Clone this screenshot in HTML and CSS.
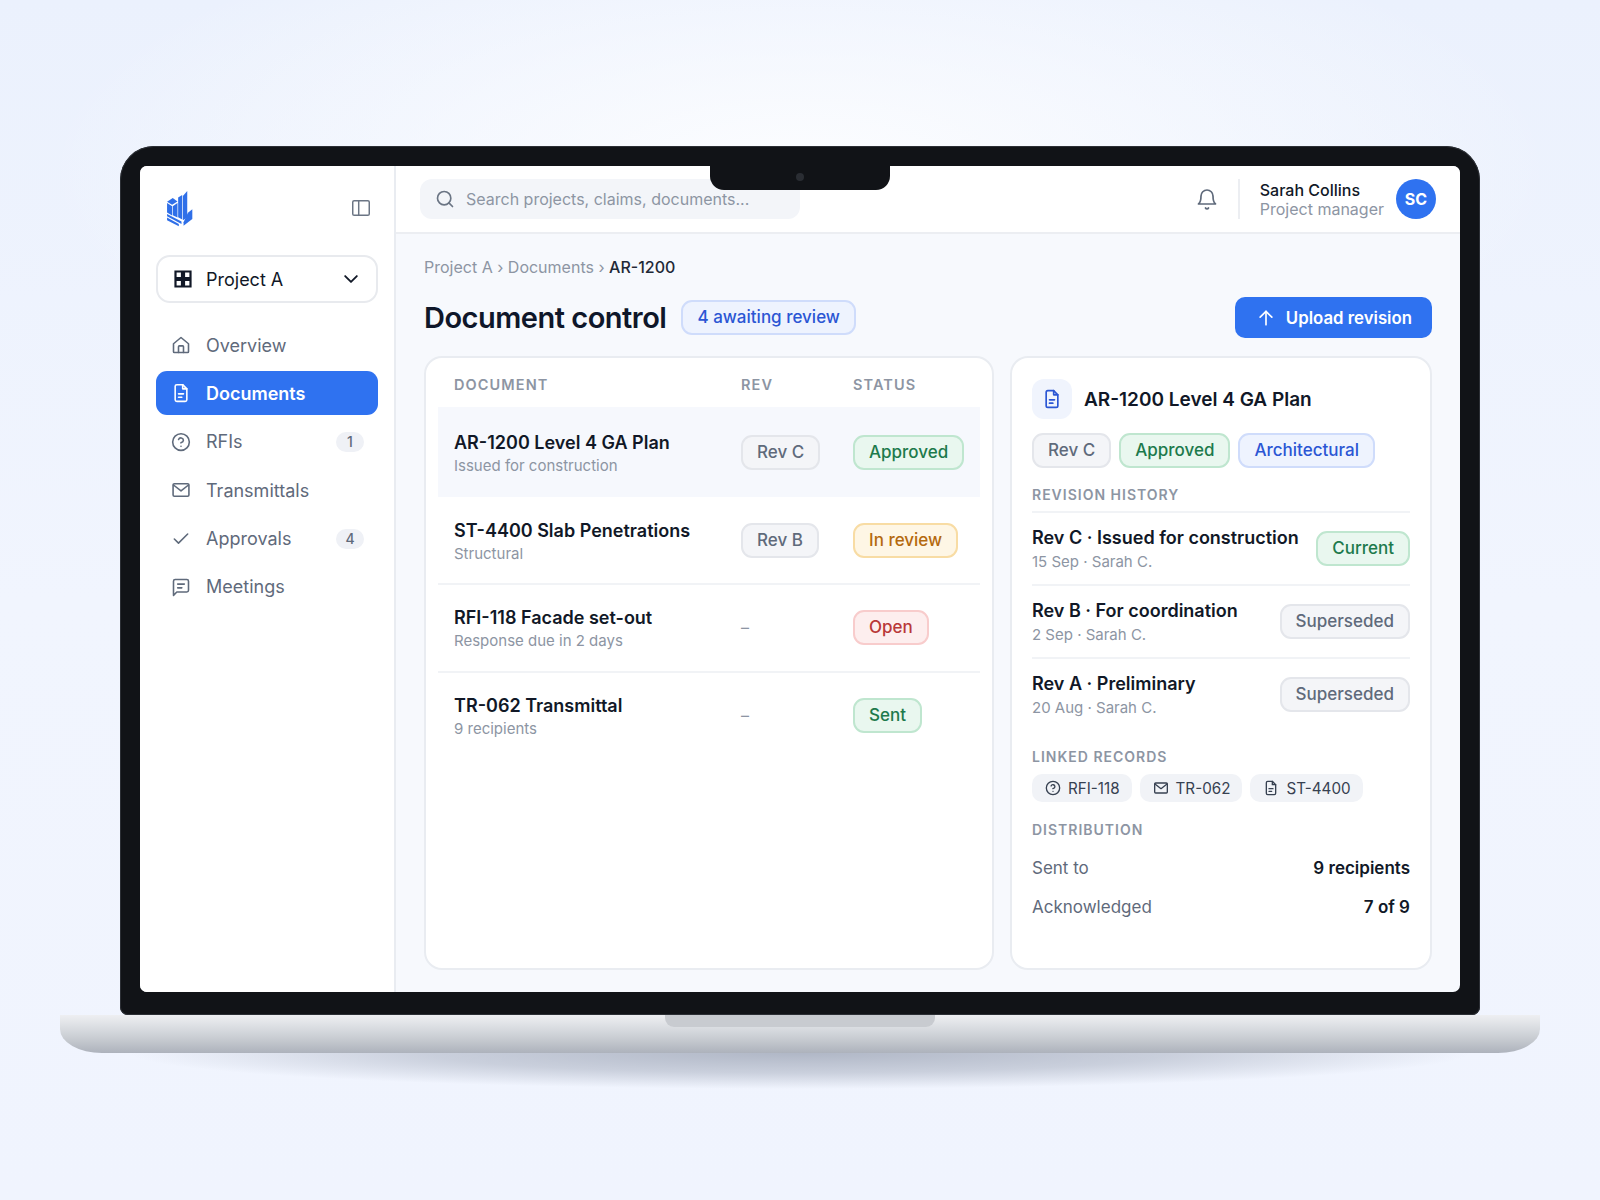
FILE: index.html
```html
<!DOCTYPE html>
<html lang="en">
<head>
    <meta charset="UTF-8">
    <title>Document control</title>
    <link rel="stylesheet" href="styles.css">
</head>
<body>
    <svg class="sprite" aria-hidden="true">
        <symbol id="i-home" viewBox="0 0 24 24"><path d="M3 10.500 12 3l9 7.500V20a1 1 0 0 1-1 1H4a1 1 0 0 1-1-1z"/><path d="M9 21v-7a1 1 0 0 1 1-1h4a1 1 0 0 1 1 1v7"/></symbol>
        <symbol id="i-file" viewBox="0 0 24 24"><path d="M14 2H7a2 2 0 0 0-2 2v16a2 2 0 0 0 2 2h10a2 2 0 0 0 2-2V7z"/><path d="M14 2v5h5"/><path d="M9 13h6"/><path d="M9 17h4"/></symbol>
        <symbol id="i-help" viewBox="0 0 24 24"><circle cx="12" cy="12" r="10"/><path d="M9.100 9a3 3 0 0 1 5.800 1c0 2-3 3-3 3"/><path d="M12 17h.01"/></symbol>
        <symbol id="i-mail" viewBox="0 0 24 24"><rect x="2.500" y="4.500" width="19" height="15" rx="1.500"/><path d="m3 6 9 7 9-7"/></symbol>
        <symbol id="i-check" viewBox="0 0 24 24"><path d="M20 6 9 17l-5-5"/></symbol>
        <symbol id="i-chat" viewBox="0 0 24 24"><path d="M21 16a2 2 0 0 1-2 2H7l-4 4V5a2 2 0 0 1 2-2h14a2 2 0 0 1 2 2z"/><path d="M8 8.500h8"/><path d="M8 13h5"/></symbol>
    </svg>

    <div class="laptop">
        <div class="bezel">
            <div class="notch"><span class="camera"></span></div>
            <div class="screen">
                <aside class="sidebar">
                    <div class="brand">
                        <svg class="logo" viewBox="140 150 80 110">
                            <path d="M143 185 160 174 174 184 158 194z"/>
                            <path d="M143 189 158 198V226L143 217z"/>
                            <path d="M160 198 174 189V232L160 225z"/>
                            <path d="M176 188V172L188 165V238L176 231z"/>
                            <path d="M190 168 203 153V232L190 240z"/>
                            <path d="M205 218 218 207V236L192 256V246z"/>
                            <path d="M143 221 186 244V251L143 228z"/>
                            <path d="M143 232 178 251V258L143 240z"/>
                        </svg>
                        <svg class="icon panel-icon" viewBox="0 0 24 24"><rect x="3" y="4" width="18" height="16" rx="1.500"/><path d="M9.500 4v16"/></svg>
                    </div>
                    <div class="project-select">
                        <svg class="project-icon" viewBox="0 0 18 18"><path d="M1.500 1.500h6.500v6.500H1.500zM10 1.500h6.500v6.500H10zM1.500 10h6.500v6.500H1.500zM10 10h6.500v6.500H10z"/></svg>
                        <span>Project A</span>
                        <svg class="icon chevron" viewBox="0 0 24 24"><path d="m5 8.500 7 7 7-7"/></svg>
                    </div>
                    <nav class="nav">
                        <a class="nav-item"><svg class="icon"><use href="#i-home"/></svg>Overview</a>
                        <a class="nav-item active"><svg class="icon"><use href="#i-file"/></svg>Documents</a>
                        <a class="nav-item"><svg class="icon"><use href="#i-help"/></svg>RFIs<span class="count">1</span></a>
                        <a class="nav-item"><svg class="icon"><use href="#i-mail"/></svg>Transmittals</a>
                        <a class="nav-item"><svg class="icon"><use href="#i-check"/></svg>Approvals<span class="count">4</span></a>
                        <a class="nav-item"><svg class="icon"><use href="#i-chat"/></svg>Meetings</a>
                    </nav>
                </aside>

                <div class="content">
                    <header class="topbar">
                        <div class="search">
                            <svg class="icon" viewBox="0 0 24 24"><circle cx="11" cy="11" r="8"/><path d="m21 21-4.300-4.300"/></svg>
                            <span>Search projects, claims, documents...</span>
                        </div>
                        <svg class="icon bell" viewBox="0 0 24 24"><path d="M6 9a6 6 0 0 1 12 0c0 6 2.500 8 2.500 8h-17S6 15 6 9"/><path d="M10.500 21a1.700 1.700 0 0 0 3 0"/></svg>
                        <div class="user">
                            <div class="user-text">
                                <div class="user-name">Sarah Collins</div>
                                <div class="user-role">Project manager</div>
                            </div>
                            <div class="avatar">SC</div>
                        </div>
                    </header>

                    <main class="main">
                        <div class="breadcrumb">Project A › Documents › <b>AR-1200</b></div>
                        <div class="page-head">
                            <h1>Document control</h1>
                            <span class="tag tag-blue head-tag">4 awaiting review</span>
                            <button class="upload">
                                <svg class="icon" viewBox="0 0 24 24"><path d="M12 20V4"/><path d="m5 11 7-7 7 7"/></svg>
                                Upload revision
                            </button>
                        </div>

                        <div class="panels">
                            <section class="card table-card">
                                <div class="doc-row doc-head">
                                    <span>DOCUMENT</span><span>REV</span><span>STATUS</span>
                                </div>
                                <div class="doc-row selected">
                                    <div class="doc-text"><div class="doc-name">AR-1200 Level 4 GA Plan</div><div class="doc-sub">Issued for construction</div></div>
                                    <div><span class="tag tag-grey">Rev C</span></div>
                                    <div><span class="tag tag-green">Approved</span></div>
                                </div>
                                <div class="doc-row after-selected">
                                    <div class="doc-text"><div class="doc-name">ST-4400 Slab Penetrations</div><div class="doc-sub">Structural</div></div>
                                    <div><span class="tag tag-grey">Rev B</span></div>
                                    <div><span class="tag tag-amber">In review</span></div>
                                </div>
                                <div class="doc-row">
                                    <div class="doc-text"><div class="doc-name">RFI-118 Facade set-out</div><div class="doc-sub">Response due in 2 days</div></div>
                                    <div class="dash">–</div>
                                    <div><span class="tag tag-red">Open</span></div>
                                </div>
                                <div class="doc-row">
                                    <div class="doc-text"><div class="doc-name">TR-062 Transmittal</div><div class="doc-sub">9 recipients</div></div>
                                    <div class="dash">–</div>
                                    <div><span class="tag tag-green">Sent</span></div>
                                </div>
                            </section>

                            <section class="card detail-card">
                                <div class="detail-head">
                                    <div class="detail-icon"><svg class="icon"><use href="#i-file"/></svg></div>
                                    <h2>AR-1200 Level 4 GA Plan</h2>
                                </div>
                                <div class="tags">
                                    <span class="tag tag-grey">Rev C</span>
                                    <span class="tag tag-green">Approved</span>
                                    <span class="tag tag-blue">Architectural</span>
                                </div>
                                <div class="label">REVISION HISTORY</div>
                                <div class="rev-list">
                                    <div class="rev-row">
                                        <div><div class="rev-name">Rev C · Issued for construction</div><div class="rev-sub">15 Sep · Sarah C.</div></div>
                                        <span class="tag tag-green">Current</span>
                                    </div>
                                    <div class="rev-row">
                                        <div><div class="rev-name">Rev B · For coordination</div><div class="rev-sub">2 Sep · Sarah C.</div></div>
                                        <span class="tag tag-grey">Superseded</span>
                                    </div>
                                    <div class="rev-row">
                                        <div><div class="rev-name">Rev A · Preliminary</div><div class="rev-sub">20 Aug · Sarah C.</div></div>
                                        <span class="tag tag-grey">Superseded</span>
                                    </div>
                                </div>
                                <div class="label linked-label">LINKED RECORDS</div>
                                <div class="chips">
                                    <span class="chip"><svg class="icon"><use href="#i-help"/></svg>RFI-118</span>
                                    <span class="chip"><svg class="icon"><use href="#i-mail"/></svg>TR-062</span>
                                    <span class="chip"><svg class="icon"><use href="#i-file"/></svg>ST-4400</span>
                                </div>
                                <div class="label dist-label">DISTRIBUTION</div>
                                <div class="dist-row"><span>Sent to</span><b>9 recipients</b></div>
                                <div class="dist-row"><span>Acknowledged</span><b>7 of 9</b></div>
                            </section>
                        </div>
                    </main>
                </div>
            </div>
        </div>
        <div class="base"><div class="base-notch"></div></div>
        <div class="base-shadow"></div>
    </div>
</body>
</html>
```

FILE: styles.css
```css
* {
    box-sizing: border-box;
}
body {
    margin: 0;
    height: 1200px;
    overflow: hidden;
    padding-top: 146px;
    font-family: Inter, 'Liberation Sans', sans-serif;
    color: #111827;
    background:
        radial-gradient(ellipse 760px 270px at 50% 170px, #fcfdff 0%, rgba(252, 253, 255, 0) 100%),
        linear-gradient(to bottom, #ebf1fd, #f1f5fe 50%, #f0f4fe);
}
.sprite {
    display: none;
}
.icon {
    width: 20px;
    height: 20px;
    flex: none;
    fill: none;
    stroke: currentColor;
    stroke-width: 2;
    stroke-linecap: round;
    stroke-linejoin: round;
}

/* laptop frame */
.laptop {
    position: relative;
    width: 1480px;
    margin: 0 auto;
}
.bezel {
    position: relative;
    z-index: 1;
    width: 1360px;
    height: 869px;
    margin: 0 auto;
    padding: 20px 20px 23px;
    background: #111317;
    border-radius: 34px 34px 8px 8px;
    box-shadow: inset 0 0 0 1px #2c2f35;
}
.notch {
    position: absolute;
    top: 20px;
    left: 590px;
    width: 180px;
    height: 24px;
    background: #111317;
    border-radius: 0 0 14px 14px;
    z-index: 2;
}
.camera {
    position: absolute;
    top: 7px;
    left: 86px;
    width: 8px;
    height: 8px;
    border-radius: 50%;
    background: #2a2d33;
}
.screen {
    display: flex;
    height: 100%;
    background: #f7f9fd;
    border-radius: 7px;
    overflow: hidden;
}
.base {
    height: 38px;
    background: linear-gradient(to bottom, #eeeff2, #dcdfe3 30%, #c6cad0 65%, #adb2bc);
    border-radius: 0 0 42px 42px / 0 0 24px 24px;
    display: flex;
    justify-content: center;
}
.base-notch {
    width: 270px;
    height: 12px;
    background: #c8cbd0;
    border-radius: 0 0 9px 9px;
}
.base-shadow {
    position: absolute;
    left: 70px;
    right: 70px;
    top: 907px;
    height: 36px;
    background: radial-gradient(ellipse 50% 100% at 50% 0, #b0b7c6 0%, rgba(176, 183, 198, 0.6) 55%, rgba(176, 183, 198, 0) 100%);
}

/* sidebar */
.sidebar {
    width: 256px;
    flex: none;
    background: #fff;
    border-right: 2px solid #e9ecf1;
    padding: 24px 16px;
}
.brand {
    display: flex;
    align-items: center;
    justify-content: space-between;
    height: 36px;
    padding: 0 6px 0 10px;
    margin-bottom: 29px;
}
.logo {
    width: 27px;
    height: 37px;
    fill: #2f6fe8;
}
.panel-icon {
    width: 22px;
    height: 22px;
    color: #6b7584;
    stroke-width: 1.600;
}
.project-select {
    display: flex;
    align-items: center;
    gap: 14px;
    height: 48px;
    padding: 0 15px 0 16px;
    border: 2px solid #e8eaee;
    border-radius: 14px;
    font-size: 18px;
    margin-bottom: 20px;
}
.project-icon {
    width: 18px;
    height: 18px;
    fill: none;
    stroke: #111827;
    stroke-width: 2.200;
}
.chevron {
    margin-left: auto;
    stroke-width: 2.200;
}
.nav {
    display: flex;
    flex-direction: column;
    gap: 4.400px;
}
.nav-item {
    display: flex;
    align-items: center;
    gap: 15px;
    height: 44px;
    padding: 0 14px 0 15px;
    border-radius: 11px;
    font-size: 18px;
    color: #5f6a7b;
}
.nav-item .icon {
    width: 20px;
    height: 20px;
    stroke-width: 1.900;
}
.nav-item.active {
    background: #2f72f0;
    color: #fff;
    font-weight: 600;
}
.count {
    margin-left: auto;
    width: 28px;
    height: 20px;
    border-radius: 10px;
    background: #eff1f6;
    font-size: 14px;
    font-weight: 500;
    text-align: center;
    line-height: 20px;
}

/* top bar */
.content {
    flex: 1;
    min-width: 0;
    display: flex;
    flex-direction: column;
}
.topbar {
    display: flex;
    align-items: center;
    height: 68px;
    padding: 0 24px;
    background: #fff;
    border-bottom: 2px solid #eceef2;
}
.search {
    display: flex;
    align-items: center;
    gap: 11px;
    width: 380px;
    height: 40px;
    padding: 0 15px;
    background: #f3f5f9;
    border-radius: 12px;
    font-size: 16px;
    color: #8d95a3;
}
.search .icon {
    color: #6b7584;
}
.bell {
    margin-left: auto;
    width: 24px;
    height: 24px;
    color: #5f6a7b;
    stroke-width: 1.700;
}
.user {
    display: flex;
    align-items: center;
    gap: 12px;
    height: 40px;
    margin-left: 19px;
    padding-left: 20px;
    border-left: 2px solid #eceef2;
}
.user-text {
    padding-top: 1px;
}
.user-name {
    font-size: 16px;
    font-weight: 500;
    line-height: 19px;
}
.user-role {
    font-size: 16px;
    line-height: 19px;
    color: #8d95a3;
}
.avatar {
    width: 40px;
    height: 40px;
    border-radius: 50%;
    background: #2f72f0;
    color: #fff;
    font-size: 16px;
    font-weight: 700;
    display: flex;
    align-items: center;
    justify-content: center;
}

/* page */
.main {
    flex: 1;
    min-height: 0;
    display: flex;
    flex-direction: column;
    padding: 22px 28px 22px;
}
.breadcrumb {
    font-size: 16px;
    line-height: 22px;
    color: #8d95a3;
}
.breadcrumb b {
    font-weight: 500;
    color: #1f2937;
}
.page-head {
    display: flex;
    align-items: center;
    gap: 15px;
    height: 41px;
    margin-top: 19px;
    margin-bottom: 18px;
}
h1 {
    margin: 0;
    font-size: 29px;
    font-weight: 600;
    letter-spacing: -0.500px;
    color: #0f172a;
}
.upload {
    display: flex;
    align-items: center;
    gap: 10px;
    height: 41px;
    margin-left: auto;
    padding: 0 20px 0 21px;
    border: none;
    border-radius: 10px;
    background: #2f72f0;
    color: #fff;
    font-family: inherit;
    font-size: 16.800px;
    font-weight: 600;
}
.panels {
    flex: 1;
    min-height: 0;
    display: flex;
    gap: 16px;
}
.card {
    background: #fff;
    border: 2px solid #e9ecf1;
    border-radius: 18px;
}
.table-card {
    flex: 1;
    min-width: 0;
    padding: 0 12px;
}
.detail-card {
    width: 422px;
    flex: none;
    padding: 21px 20px 0;
}

/* tags */
.tag {
    display: inline-block;
    height: 35px;
    padding: 0 14px;
    border: 2px solid;
    border-radius: 11px;
    font-size: 17px;
    font-weight: 500;
    line-height: 31px;
    white-space: nowrap;
}
.tag-grey {
    background: #f4f5f8;
    border-color: #e4e6eb;
    color: #5f6a7b;
}
.tag-green {
    background: #e9f7ef;
    border-color: #bfe6cf;
    color: #1d7a4c;
}
.tag-amber {
    background: #fef6e5;
    border-color: #f8dca4;
    color: #b4690e;
}
.tag-red {
    background: #fdeeee;
    border-color: #f8cccc;
    color: #b93838;
}
.tag-blue {
    background: #eef3fe;
    border-color: #cfdcfb;
    color: #2b56d4;
}

/* document table */
.doc-row {
    display: grid;
    grid-template-columns: 287px 112px 1fr;
    align-items: center;
    height: 88px;
    padding: 0 16px;
    box-shadow: inset 0 2px 0 #f1f3f6;
}
.doc-head {
    height: 49px;
    padding-top: 3px;
    box-shadow: none;
    font-size: 14.500px;
    font-weight: 600;
    letter-spacing: 1.100px;
    color: #8d95a3;
}
.selected {
    height: 90px;
    background: #f6f8fd;
    box-shadow: none;
}
.after-selected {
    height: 86px;
    box-shadow: none;
}
.doc-text {
    padding-top: 2px;
}
.doc-name {
    font-size: 18px;
    font-weight: 600;
    line-height: 24px;
}
.doc-sub {
    margin-top: 1px;
    font-size: 15px;
    line-height: 20px;
    color: #8d95a3;
}
.dash {
    color: #8d95a3;
    font-size: 16px;
}

/* detail panel */
.detail-head {
    display: flex;
    align-items: center;
    gap: 12px;
    margin-bottom: 14px;
}
.detail-icon {
    width: 40px;
    height: 40px;
    border-radius: 12px;
    background: #f0f4fd;
    color: #2b56d4;
    display: flex;
    align-items: center;
    justify-content: center;
}
h2 {
    margin: 0;
    font-size: 19px;
    font-weight: 600;
}
.tags {
    display: flex;
    gap: 8px;
}
.label {
    font-size: 14px;
    font-weight: 600;
    letter-spacing: 1px;
    line-height: 18px;
    color: #8d95a3;
}
.tags + .label {
    margin-top: 18px;
}
.rev-list {
    margin-top: 7px;
}
.rev-row {
    display: flex;
    align-items: center;
    justify-content: space-between;
    height: 73px;
    border-top: 2px solid #f1f3f6;
}
.rev-name {
    font-size: 18px;
    font-weight: 600;
    line-height: 24px;
}
.rev-sub {
    margin-top: 2px;
    font-size: 15px;
    line-height: 20px;
    color: #8d95a3;
}
.linked-label {
    margin-top: 18px;
}
.chips {
    display: flex;
    gap: 8px;
    margin-top: 8px;
}
.chip {
    display: flex;
    align-items: center;
    gap: 7px;
    height: 28px;
    padding: 0 12px 0 13px;
    border-radius: 10px;
    background: #f1f3f7;
    font-size: 15.200px;
    color: #374151;
}
.chip .icon {
    width: 16px;
    height: 16px;
}
.dist-label {
    margin-top: 19px;
}
.dist-row {
    display: flex;
    justify-content: space-between;
    align-items: center;
    height: 39px;
    font-size: 17px;
    color: #5f6a7b;
}
.dist-label + .dist-row {
    margin-top: 9px;
}
.dist-row b {
    font-weight: 600;
    color: #111827;
}
```
